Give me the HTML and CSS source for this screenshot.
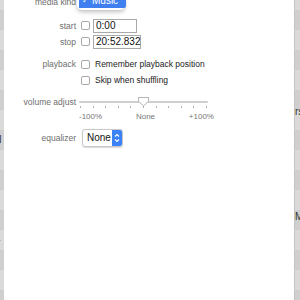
FILE: index.html
```html
<!DOCTYPE html>
<html>
<head>
<meta charset="utf-8">
<link rel="stylesheet" href="styles.css">
</head>
<body>
<div class="strip strip-left">
  <span class="frag frag-ll">ll</span>
  <span class="frag frag-r">r</span>
</div>
<div class="sheet">
  <div class="form">
    <div class="label row-media">media kind</div>
    <div class="row-media ctrl">
      <div class="menu">
        <div class="menu-item"><span class="check">✓</span>Music</div>
      </div>
    </div>

    <div class="label row-start">start</div>
    <div class="ctrl row-start"><span class="cb"></span><span class="field f-start">0:00</span></div>

    <div class="label row-stop">stop</div>
    <div class="ctrl row-stop"><span class="cb"></span><span class="field f-stop">20:52.832</span></div>

    <div class="label row-play">playback</div>
    <div class="ctrl row-play"><span class="cb"></span><span class="cbtext">Remember playback position</span></div>

    <div class="label row-skip"></div>
    <div class="ctrl row-skip"><span class="cb"></span><span class="cbtext">Skip when shuffling</span></div>

    <div class="label row-vol">volume adjust</div>
    <div class="ctrl row-vol">
      <div class="slider">
        <div class="track"></div>
        <div class="ticks">
          <i></i><i></i><i></i><i></i><i></i><i></i><i></i><i></i><i></i><i></i><i></i>
        </div>
        <svg class="thumb" width="13" height="11" viewBox="0 0 13 11"><path d="M1.5 1.5 H11.5 V5.5 L6.5 9.8 L1.5 5.5 Z" fill="#fff" stroke="#b5b5b5" stroke-width="1"/></svg>
      </div>
    </div>

    <div class="label row-scale"></div>
    <div class="ctrl row-scale scale"><span>-100%</span><span>None</span><span>+100%</span></div>

    <div class="label row-eq">equalizer</div>
    <div class="ctrl row-eq">
      <div class="popup"><span class="popup-text">None</span><span class="stepper"><svg width="10" height="16" viewBox="0 0 10 16"><path d="M3 6.5 L5 4.5 L7 6.5 M3 9.5 L5 11.5 L7 9.5" fill="none" stroke="#fff" stroke-width="1.1"/></svg></span></div>
    </div>
  </div>
</div>
<div class="strip strip-right">
  <span class="frag frag-rs">rs</span>
  <span class="frag frag-m">M</span>
</div>
</body>
</html>
```
FILE: styles.css
```css
html, body {
  margin: 0;
  padding: 0;
}
body {
  width: 300px;
  height: 300px;
  overflow: hidden;
  display: flex;
  font-family: "Liberation Sans", Arial, sans-serif;
  font-size: 8.5px;
  color: #222;
  background: repeating-linear-gradient(to bottom, #dadada 0px, #dadada 10px, #cfcfcf 10px, #cfcfcf 30px, #dadada 30px, #dadada 50px);
  background-size: 100% 40px;
}
.strip {
  position: relative;
  overflow: hidden;
  flex: none;
}
.strip-left {
  width: 4px;
}
.strip-right {
  width: 5px;
  border-left: 1px solid #c4c4c4;
}
.frag {
  position: absolute;
  font-size: 10px;
  color: #333;
  line-height: 10px;
}
.frag-ll { left: -3px; top: 135px; }
.frag-r { left: -3px; top: 238px; }
.frag-rs { left: 0px; top: 107px; }
.frag-m { left: 0px; top: 212px; }

.sheet {
  flex: 1;
  background: #fff;
  position: relative;
}
.form {
  display: grid;
  grid-template-columns: 72px 1fr;
  column-gap: 5px;
  margin-top: -7px;
}
.label {
  text-align: right;
  color: #6e6e6e;
  display: flex;
  align-items: center;
  justify-content: flex-end;
  white-space: nowrap;
}
.ctrl {
  display: flex;
  align-items: center;
  gap: 3px;
}
.row-media { height: 17px; }
.row-start { height: 15px; margin-top: 8px; }
.row-stop { height: 15px; margin-top: 1px; }
.row-play { height: 14px; margin-top: 8px; }
.row-skip { height: 14px; margin-top: 2px; }
.row-vol { height: 14px; margin-top: 8px; }
.row-scale { height: 11px; margin-top: 2px; }
.row-eq { height: 19px; margin-top: 6px; }

.menu {
  margin-left: -4px;
  height: 17px;
  width: 48px;
  background: #fff;
  border-radius: 0 0 5px 5px;
  box-shadow: 0 2px 4px rgba(0,0,0,0.25);
  position: relative;
  align-self: flex-start;
}
.menu-item {
  position: absolute;
  left: 2px;
  right: -1px;
  top: 0;
  height: 15px;
  background: #3f7ff0;
  color: #fff;
  font-size: 10px;
  display: flex;
  align-items: center;
  border-radius: 0 0 2px 0;
}
.check {
  font-size: 8px;
  margin: 0 3px 0 3px;
}
.cb {
  width: 7px;
  height: 7px;
  border: 1px solid #a8a8a8;
  border-radius: 2px;
  background: #fff;
  flex: none;
}
.field {
  border: 1px solid #a9a9a9;
  height: 12px;
  line-height: 12px;
  padding: 0 2px;
  font-size: 10px;
  color: #111;
  box-sizing: content-box;
}
.f-start { width: 38px; }
.f-stop { width: 42px; }
.cbtext {
  margin-left: 2px;
  font-size: 8.5px;
  color: #222;
  white-space: nowrap;
}
.slider {
  position: relative;
  width: 129px;
  height: 14px;
  margin-left: -2px;
}
.track {
  position: absolute;
  left: 0;
  right: 0;
  top: 6px;
  height: 2px;
  border-radius: 1px;
  background: #cfcfcf;
}
.ticks {
  position: absolute;
  left: 1px;
  right: 1px;
  top: 11px;
  display: flex;
  justify-content: space-between;
}
.ticks i {
  width: 1px;
  height: 2px;
  background: #b0b0b0;
}
.thumb {
  position: absolute;
  left: 58px;
  top: 1px;
}
.scale {
  width: 135px;
  justify-content: space-between;
  font-size: 8px;
  color: #777;
  margin-left: -2px;
}
.popup {
  margin-left: 1px;
  width: 41px;
  height: 18px;
  border: 1px solid #c8c8c8;
  border-radius: 3px;
  display: flex;
  align-items: center;
  box-sizing: border-box;
  overflow: hidden;
  box-shadow: 0 0.5px 1px rgba(0,0,0,0.15);
}
.popup-text {
  flex: 1;
  padding-left: 4px;
  font-size: 10px;
  color: #111;
}
.stepper {
  width: 10px;
  height: 100%;
  background: #3a82f6;
  display: flex;
  align-items: center;
  justify-content: center;
}
```
